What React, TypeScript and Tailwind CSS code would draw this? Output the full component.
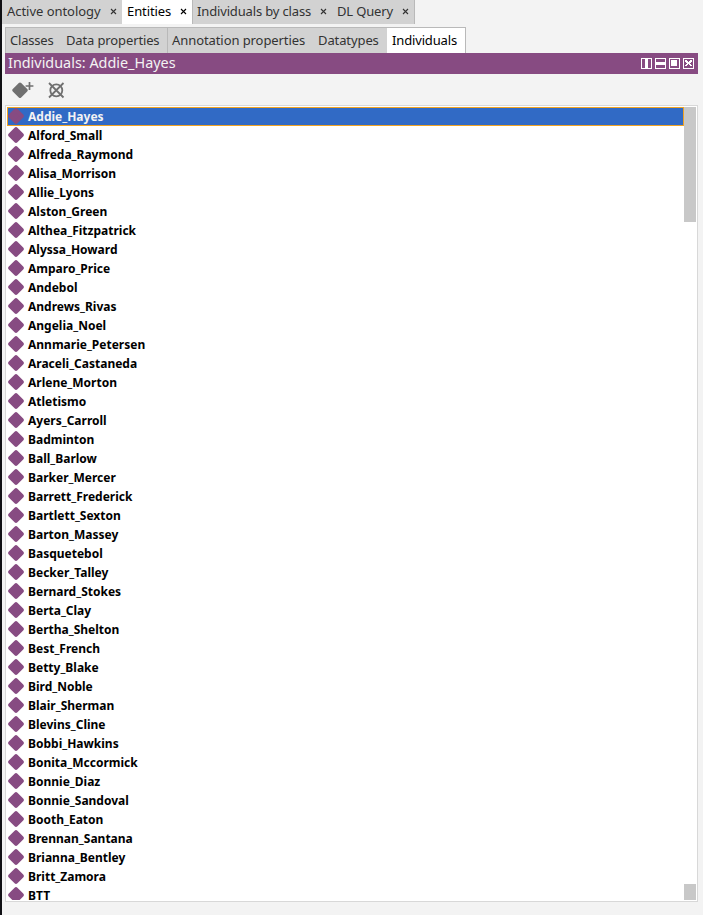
const names = [
  'Addie_Hayes', 'Alford_Small', 'Alfreda_Raymond', 'Alisa_Morrison', 'Allie_Lyons', 'Alston_Green',
  'Althea_Fitzpatrick', 'Alyssa_Howard', 'Amparo_Price', 'Andebol', 'Andrews_Rivas', 'Angelia_Noel',
  'Annmarie_Petersen', 'Araceli_Castaneda', 'Arlene_Morton', 'Atletismo', 'Ayers_Carroll', 'Badminton',
  'Ball_Barlow', 'Barker_Mercer', 'Barrett_Frederick', 'Bartlett_Sexton', 'Barton_Massey', 'Basquetebol',
  'Becker_Talley', 'Bernard_Stokes', 'Berta_Clay', 'Bertha_Shelton', 'Best_French', 'Betty_Blake',
  'Bird_Noble', 'Blair_Sherman', 'Blevins_Cline', 'Bobbi_Hawkins', 'Bonita_Mccormick', 'Bonnie_Diaz',
  'Bonnie_Sandoval', 'Booth_Eaton', 'Brennan_Santana', 'Brianna_Bentley', 'Britt_Zamora', 'BTT',
];

const mainTabs = [
  { label: 'Active ontology', box: 'w-[120px] pl-[5px] pr-[5px] tracking-[-0.04px]' },
  { label: 'Entities', active: true, box: 'w-[70px] pl-[5px] pr-[5px] tracking-[-0.1px]' },
  { label: 'Individuals by class', box: 'w-[140px] pl-[4px] pr-[5px] border-l border-[#b9b9b9] tracking-[-0.15px]' },
  { label: 'DL Query', box: 'w-[83px] pl-[5px] pr-[5px] border-r border-[#b9b9b9] tracking-[-0.15px]' },
];

const subTabs = [
  { label: 'Classes', box: 'w-[56px] pl-[4px] border-l tracking-[-0.2px]' },
  { label: 'Data properties', box: 'w-[107px] pl-[5px] border-r tracking-[-0.13px]' },
  { label: 'Annotation properties', box: 'w-[145px] pl-[4px] tracking-[-0.08px]' },
  { label: 'Datatypes', box: 'w-[74px] pl-[5px] tracking-[-0.1px]' },
  { label: 'Individuals', active: true, box: 'w-[79px] pl-[5px] border-r tracking-[-0.15px]' },
];

function Close() {
  return (
    <svg width="7" height="7" viewBox="0 0 7 7" className="shrink-0" stroke="currentColor" strokeWidth="1.1">
      <path d="M1 1L6 6M6 1L1 6" />
    </svg>
  );
}

function Diamond() {
  return (
    <svg width="16" height="16" viewBox="0 0 16 16" className="-mt-px shrink-0">
      <path d="M8 2.2L13.8 8L8 13.8L2.2 8Z" fill="#874b82" stroke="#874b82" strokeWidth="4" strokeLinejoin="round" />
    </svg>
  );
}

function HeaderButtons() {
  return (
    <svg width="53" height="11" viewBox="0 0 53 11" shapeRendering="crispEdges">
      <g fill="none" stroke="#fff">
        <rect x="0.5" y="0.5" width="10" height="10" />
        <rect x="14.5" y="0.5" width="10" height="10" />
        <rect x="28.5" y="0.5" width="10" height="10" />
        <rect x="42.5" y="0.5" width="10" height="10" />
      </g>
      <g fill="#fff">
        <rect x="4" y="1" width="3" height="9" />
        <rect x="15" y="4" width="9" height="3" />
        <rect x="30" y="2" width="6" height="6" />
        <path d="M44 2h2v1h1v1h1v-1h1v-1h2v2h-1v1h-1v1h1v1h1v1h-2v-1h-1v-1h-1v1h-1v1h-2v-1h1v-1h1v-1h-1v-1h-1z" />
      </g>
    </svg>
  );
}

export default function App() {
  return (
    <div className="flex h-[915px] w-[703px] flex-col overflow-hidden border-l-2 border-[#101014] bg-[#f3f3f3] font-['Noto_Sans',sans-serif] text-[13px] text-[#333]">
      <div className="flex h-6 shrink-0">
        {mainTabs.map((t) => (
          <div key={t.label} className={`flex shrink-0 items-center justify-between whitespace-nowrap pb-px ${t.box} ${t.active ? 'bg-white text-black' : 'bg-[#d2d2d2]'}`}>
            <span>{t.label}</span>
            <Close />
          </div>
        ))}
      </div>
      <div className="mt-[3px] ml-[3px] flex h-[26px] shrink-0">
        {subTabs.map((t) => (
          <div key={t.label} className={`flex shrink-0 items-center whitespace-nowrap border-t border-[#b9b9b9] ${t.box} ${t.active ? 'bg-white text-black' : 'bg-[#d2d2d2]'}`}>
            {t.label}
          </div>
        ))}
      </div>
      <div className="ml-[3px] flex h-[21px] w-[693px] shrink-0 items-center justify-between bg-[#874b82] pr-[4px] pl-[3px] text-[14.4px] text-[#f3f3f3]">
        <span className="-mt-[2px]">Individuals: Addie_Hayes</span>
        <HeaderButtons />
      </div>
      <div className="flex h-[31px] shrink-0 items-center pl-[10px]">
        <svg width="22" height="18" viewBox="12 81 22 18" className="mt-px">
          <path d="M20 84.2L26 90.2L20 96.2L14 90.2Z" fill="#707070" stroke="#707070" strokeWidth="3.4" strokeLinejoin="round" />
          <path d="M25.6 86H33.4M29.5 82.1V89.9" stroke="#707070" strokeWidth="1.7" />
        </svg>
        <svg width="18" height="18" viewBox="47 81 18 18" className="mt-px ml-[13px]" fill="none" stroke="#707070">
          <circle cx="56.3" cy="90.3" r="6" strokeWidth="1.8" />
          <path d="M49 83L63.5 97.5M63.5 83L49 97.5" strokeWidth="1.8" />
        </svg>
      </div>
      <div className="ml-[3px] flex h-[797px] w-[693px] shrink-0 border border-[#d8d8d8] bg-white p-px">
        <div className="h-[793px] w-[677px] overflow-hidden">
          {names.map((name, i) => (
            <div key={name} className={`flex h-[19px] items-center border text-[12px] font-bold ${i === 0 ? 'border-[#f0a323] bg-[#316ac5] text-[#f3f3f3]' : 'border-transparent text-black'}`}>
              <Diamond />
              <span className="ml-1 leading-[17px]">{name}</span>
            </div>
          ))}
        </div>
        <div className="flex h-[793px] w-3 flex-col justify-between">
          <div className="h-[115px] bg-[#c8c8c8]" />
          <div className="h-4 bg-[#c8c8c8]" />
        </div>
      </div>
    </div>
  );
}
